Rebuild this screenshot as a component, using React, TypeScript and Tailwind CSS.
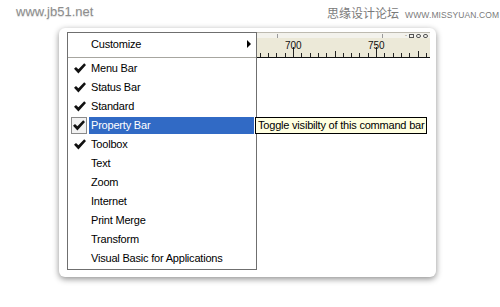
import React from "react";

const Check = () => (
  <svg width="12" height="11" viewBox="0 0 12 11" className="block">
    <path d="M0 5.8 L2 3.9 L4.4 6.2 L10.2 0.3 L12 2 L4.4 10.6 Z" fill="#111" />
  </svg>
);

type Item = { label: string; checked?: boolean; active?: boolean };

const items: Item[] = [
  { label: "Menu Bar", checked: true },
  { label: "Status Bar", checked: true },
  { label: "Standard", checked: true },
  { label: "Property Bar", checked: true, active: true },
  { label: "Toolbox", checked: true },
  { label: "Text" },
  { label: "Zoom" },
  { label: "Internet" },
  { label: "Print Merge" },
  { label: "Transform" },
  { label: "Visual Basic for Applications" },
];

const Ruler = () => {
  const ticks: React.ReactNode[] = [];
  for (let k = -4; k <= 16; k++) {
    const x = 36 + k * 8.3;
    if (x < 0 || x > 173) continue;
    const major = k === 0 || k === 10;
    const mid = k === 5 || k === -5 || k === 15;
    const y1 = major ? 9 : mid ? 13 : 15;
    ticks.push(
      <line key={k} x1={Math.round(x) + 0.5} x2={Math.round(x) + 0.5} y1={y1} y2={19} stroke="#222" strokeWidth={1} />
    );
  }
  return (
    <svg width="173" height="19" className="block">
      {ticks}
      <text x="28" y="11" fontSize="10" fontFamily="Liberation Sans, Arial, sans-serif" fill="#111">700</text>
      <text x="111" y="11" fontSize="10" fontFamily="Liberation Sans, Arial, sans-serif" fill="#111">750</text>
    </svg>
  );
};

export default function App() {
  return (
    <div className="relative w-[500px] h-[307px] bg-white overflow-hidden font-['Liberation_Sans',Arial,sans-serif] text-black">
      <div className="absolute left-[16px] top-[3px] text-[13px] leading-[18px] text-[#8d8d8d] [text-shadow:0_1px_1px_#d8d8d8]">
        www.jb51.net
      </div>
      <div className="absolute left-[327px] top-[5px] flex items-end gap-[6px] text-[#7a7a7a]">
        <span className="text-[12px] leading-[16px] font-['Noto_Sans_CJK_SC',sans-serif]">思缘设计论坛</span>
        <span className="text-[8.5px] leading-[12px] tracking-[0.1px]">WWW.MISSYUAN.COM</span>
      </div>

      <div className="pt-[28px] pl-[59px]">
        <div className="w-[377px] h-[249px] rounded-[6px] bg-white shadow-[0_2px_6px_rgba(0,0,0,0.45)] flex items-start pt-[4px] pl-[8px]">
          <div className="w-[190px] h-[238px] border border-[#6f6f6f] bg-white flex flex-col text-[11px] tracking-[-0.2px]">
            <div className="h-[22px] flex items-center">
              <span className="pl-[23px]">Customize</span>
              <svg width="4" height="8" viewBox="0 0 4 8" className="ml-auto mr-[5px]">
                <path d="M0 0 L4 4 L0 8 Z" fill="#000" />
              </svg>
            </div>
            <div className="h-[4px] flex items-center">
              <div className="h-px w-full bg-[#a7a6a0]" />
            </div>
            {items.map((it) => (
              <div key={it.label} className="h-[19px] flex items-stretch">
                <div className="w-[21px] flex items-center relative">
                  {it.active ? (
                    <div className="ml-[3px] my-[1px] w-[16px] self-stretch border border-[#8a8a8a] bg-[#f2f2f2] flex items-center justify-center">
                      <Check />
                    </div>
                  ) : it.checked ? (
                    <div className="pl-[6px]">
                      <Check />
                    </div>
                  ) : null}
                </div>
                <div
                  className={
                    it.active
                      ? "flex-1 mr-[2px] my-[1px] pl-[2px] flex items-center bg-[#316ac5] text-white"
                      : "flex-1 mr-[2px] pl-[2px] flex items-center"
                  }
                >
                  {it.label}
                </div>
              </div>
            ))}
          </div>
          <div className="w-[173px] flex flex-col">
            <div className="h-[6px] border-t border-[#bdbab0] bg-[#f3f2ec] flex items-start relative">
              <div className="absolute left-[20px] top-[1px] w-px h-[4px] bg-[#9a9a9a]" />
              <div className="absolute left-[125px] top-[1px] w-px h-[4px] bg-[#9a9a9a]" />
              <div className="ml-auto mr-[2px] flex items-center gap-[2px] text-[6px] leading-[5px] text-[#555]">
                <span>-</span>
                <span className="border border-[#555] w-[5px] h-[4px]" />
                <span className="border border-[#555] w-[5px] h-[4px] rounded-full" />
                <span className="border border-[#555] w-[5px] h-[4px] rounded-full" />
              </div>
            </div>
            <div className="h-[20px] bg-[#ece9d8] border-b border-[#111]">
              <Ruler />
            </div>
          </div>
        </div>
      </div>

      <div className="absolute left-[255px] top-[117px] h-[17px] px-[2px] border border-black bg-[#ffffe1] text-[11px] leading-[15px] tracking-[-0.2px] whitespace-nowrap">
        Toggle visibilty of this command bar
      </div>
    </div>
  );
}
